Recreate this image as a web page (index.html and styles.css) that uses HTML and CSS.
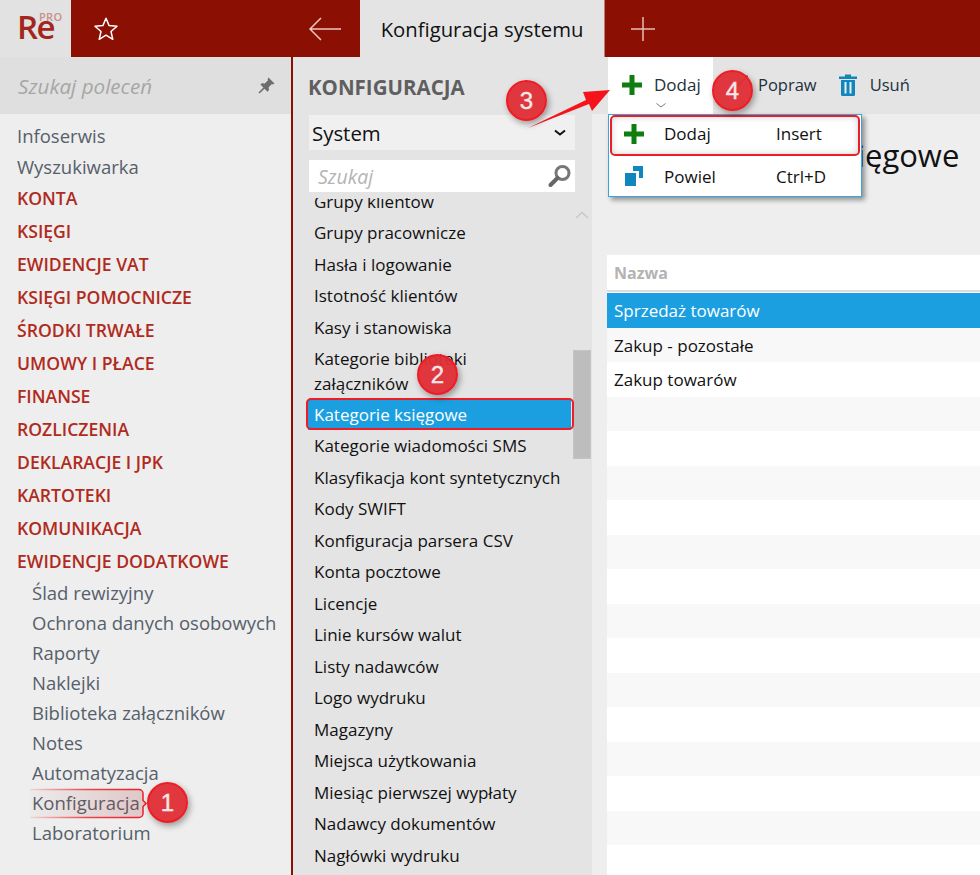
FILE: index.html
```html
<!DOCTYPE html>
<html lang="pl">
<head>
<meta charset="utf-8">
<title>Konfiguracja systemu</title>
<link rel="stylesheet" href="styles.css">
</head>
<body>
<div class="app">
  <header class="topbar">
    <div class="logo"><span class="logo-re">Re</span><span class="logo-pro">PRO</span></div>
    <div class="fav">
      <svg width="28" height="28" viewBox="0 0 28 28"><path d="M14 3.2l3.1 7.4 7.9.7-6 5.2 1.8 7.8-6.8-4.1-6.8 4.1 1.8-7.8-6-5.2 7.9-.7z" fill="none" stroke="#fff" stroke-width="1.5" stroke-linejoin="round"/></svg>
    </div>
    <div class="back">
      <svg width="34" height="26" viewBox="0 0 34 26"><path d="M33 13H2M13 2L2 13l11 11" fill="none" stroke="#eec5bf" stroke-width="1.5"/></svg>
    </div>
    <div class="tab">Konfiguracja systemu</div>
    <div class="newtab">
      <svg width="26" height="26" viewBox="0 0 26 26"><path d="M13 1v24M1 13h24" fill="none" stroke="#e8bcb6" stroke-width="1.5"/></svg>
    </div>
  </header>
  <div class="main">
    <aside class="side">
      <div class="side-search">
        <span>Szukaj poleceń</span>
        <svg class="pin" width="20" height="20" viewBox="0 0 20 20"><path d="M12.5 1.5l6 6-1.6 1-1-.4-3.2 3.2.2 3-1.4 1.4-3-3-5 4.8-1-.9 4.900-5-3-3 1.400-1.400 3 .2 3.200-3.200-.4-1z" fill="#6d6d6d"/></svg>
      </div>
      <nav class="side-nav">
        <a class="plain">Infoserwis</a>
        <a class="plain">Wyszukiwarka</a>
        <a class="group">KONTA</a>
        <a class="group">KSIĘGI</a>
        <a class="group">EWIDENCJE VAT</a>
        <a class="group">KSIĘGI POMOCNICZE</a>
        <a class="group">ŚRODKI TRWAŁE</a>
        <a class="group">UMOWY I PŁACE</a>
        <a class="group">FINANSE</a>
        <a class="group">ROZLICZENIA</a>
        <a class="group">DEKLARACJE I JPK</a>
        <a class="group">KARTOTEKI</a>
        <a class="group">KOMUNIKACJA</a>
        <a class="group">EWIDENCJE DODATKOWE</a>
        <a class="sub">Ślad rewizyjny</a>
        <a class="sub">Ochrona danych osobowych</a>
        <a class="sub">Raporty</a>
        <a class="sub">Naklejki</a>
        <a class="sub">Biblioteka załączników</a>
        <a class="sub">Notes</a>
        <a class="sub">Automatyzacja</a>
        <a class="sub">Konfiguracja</a>
        <a class="sub">Laboratorium</a>
      </nav>
    </aside>
    <section class="mid">
      <h2 class="mid-title">KONFIGURACJA</h2>
      <div class="select"><span>System</span>
        <svg width="12" height="8" viewBox="0 0 12 8"><path d="M1 1.500l5 4 5-4" fill="none" stroke="#111" stroke-width="2"/></svg>
      </div>
      <div class="search"><span>Szukaj</span>
        <svg width="26" height="26" viewBox="0 0 26 26"><circle cx="15.500" cy="10" r="6.500" fill="#fff" stroke="#777" stroke-width="3"/><path d="M10.500 15l-7 7" stroke="#666" stroke-width="4" stroke-linecap="round"/></svg>
      </div>
      <div class="list-wrap">
        <ul class="list">
          <li>Grupy klientów</li>
          <li>Grupy pracownicze</li>
          <li>Hasła i logowanie</li>
          <li>Istotność klientów</li>
          <li>Kasy i stanowiska</li>
          <li class="two">Kategorie biblioteki załączników</li>
          <li class="active">Kategorie księgowe</li>
          <li>Kategorie wiadomości SMS</li>
          <li>Klasyfikacja kont syntetycznych</li>
          <li>Kody SWIFT</li>
          <li>Konfiguracja parsera CSV</li>
          <li>Konta pocztowe</li>
          <li>Licencje</li>
          <li>Linie kursów walut</li>
          <li>Listy nadawców</li>
          <li>Logo wydruku</li>
          <li>Magazyny</li>
          <li>Miejsca użytkowania</li>
          <li>Miesiąc pierwszej wypłaty</li>
          <li>Nadawcy dokumentów</li>
          <li>Nagłówki wydruku</li>
        </ul>
        <div class="scroll">
          <svg class="scroll-up" width="14" height="8" viewBox="0 0 14 8"><path d="M1 7l6-5.500L13 7" fill="none" stroke="#c8c8c8" stroke-width="1.500"/></svg>
          <div class="thumb"></div>
        </div>
      </div>
    </section>
    <section class="content">
      <div class="toolbar">
        <div class="tool tool-open">
          <svg class="i-plus" width="20" height="20" viewBox="0 0 20 20"><path d="M10 0v20M0 10h20" stroke="#0f7d0f" stroke-width="5"/></svg>
          <span>Dodaj</span>
          <svg class="caret" width="10" height="5" viewBox="0 0 10 5"><path d="M.500.500L5 4 9.500.500" fill="none" stroke="#777"/></svg>
        </div>
        <div class="tool tool-edit">
          <svg class="pencil" width="10" height="11" viewBox="0 0 10 11"><path d="M9 0l1 1.500L2 10l-2 1 .500-2z" fill="#a01c1c"/></svg>
          <span>Popraw</span>
        </div>
        <div class="tool tool-del">
          <svg width="18" height="22" viewBox="0 0 18 22"><path d="M0 2.500h18V5H0zM6 .500h6v2H6z" fill="#0f86bd"/><path d="M2 6h14v14.500a1.500 1.500 0 0 1-1.500 1.500h-11A1.500 1.500 0 0 1 2 20.500z" fill="#0f86bd"/><path d="M6.500 8v11.500M11.500 8v11.500" stroke="#eee" stroke-width="2"/></svg>
          <span>Usuń</span>
        </div>
      </div>
      <div class="body">
        <h1 class="title">Kategorie księgowe</h1>
        <div class="thead">Nazwa</div>
        <div class="rows">
          <div class="row selected">Sprzedaż towarów</div>
          <div class="row alt">Zakup - pozostałe</div>
          <div class="row">Zakup towarów</div>
          <div class="row alt"></div><div class="row"></div>
          <div class="row alt"></div><div class="row"></div>
          <div class="row alt"></div><div class="row"></div>
          <div class="row alt"></div><div class="row"></div>
          <div class="row alt"></div><div class="row"></div>
          <div class="row alt"></div><div class="row"></div>
          <div class="row alt"></div><div class="row"></div>
        </div>
      </div>
    </section>
  </div>

  <div class="menu">
    <div class="menu-item">
      <svg width="20" height="20" viewBox="0 0 20 20"><path d="M10 0v20M0 10h20" stroke="#0f7d0f" stroke-width="5"/></svg>
      <span class="m-label">Dodaj</span><span class="m-key">Insert</span>
    </div>
    <div class="menu-item">
      <svg width="20" height="20" viewBox="0 0 20 20"><path d="M9 0h10v12h-4V5H9z" fill="#0f86bd"/><path d="M1 7h11v13H1z" fill="#0f86bd"/></svg>
      <span class="m-label">Powiel</span><span class="m-key">Ctrl+D</span>
    </div>
  </div>

  <svg class="mark-konf" width="120" height="32" viewBox="0 0 120 32">
    <defs>
      <linearGradient id="konfStroke" x1="0" x2="1" y1="0" y2="0">
        <stop offset="0" stop-color="#ee1c25" stop-opacity=".1"/>
        <stop offset=".5" stop-color="#ee1c25" stop-opacity=".8"/>
        <stop offset="1" stop-color="#ee1c25"/>
      </linearGradient>
      <linearGradient id="konfFill" x1="0" x2="1" y1="0" y2="0">
        <stop offset="0" stop-color="#b43c3c" stop-opacity=".02"/>
        <stop offset="1" stop-color="#a83c3c" stop-opacity=".22"/>
      </linearGradient>
    </defs>
    <path d="M0 1.500H109a4 4 0 0 1 4 4v7l3 3-3 3v7a4 4 0 0 1-4 4H0z" fill="url(#konfFill)"/>
    <path d="M0 1.500H109a4 4 0 0 1 4 4v7l3 3-3 3v7a4 4 0 0 1-4 4H0" fill="none" stroke="url(#konfStroke)" stroke-width="1.500"/>
  </svg>
  <div class="mark mark-kat"></div>
  <div class="mark mark-dodaj"></div>

  <svg class="arrow" width="84" height="48" viewBox="0 0 84 48"><path d="M0 43L58 15 55 7 82 5 64 26 61 19z" fill="#f5141c"/></svg>

  <div class="badge b1">1</div>
  <div class="badge b2">2</div>
  <div class="badge b3">3</div>
  <div class="badge b4">4</div>
</div>
</body>
</html>
```
FILE: styles.css
```css
* { box-sizing: border-box; }
html, body { margin: 0; padding: 0; }
body { width: 980px; height: 875px; overflow: hidden; font-family: "Open Sans", "Noto Sans", sans-serif; background: #eee; }
.app { position: relative; width: 980px; height: 875px; overflow: hidden; }

.topbar { display: flex; height: 57px; background: #8b1003; }
.logo { position: relative; width: 71px; background: #e2e2e2; }
.logo-re { position: absolute; left: 17px; top: 5px; font: 600 33px/44px "Open Sans", sans-serif; color: #a3261c; letter-spacing: -1.500px; }
.logo-pro { position: absolute; left: 39px; top: 11px; font: 600 11px/12px "Open Sans", sans-serif; color: #c98f8a; letter-spacing: .3px; }
.fav { width: 69px; display: flex; align-items: center; justify-content: center; }
.back { width: 220px; display: flex; align-items: center; justify-content: flex-end; padding-right: 18px; }
.tab { width: 244px; background: #e4e4e4; color: #111; font-size: 20.300px; font-weight: 500; display: flex; align-items: center; justify-content: center; white-space: nowrap; }
.newtab { width: 76px; display: flex; align-items: center; justify-content: center; border-left: 1px solid #b9807a; }

.main { display: flex; height: 818px; }

.side { width: 293px; flex: none; background: #eee; border-right: 2px solid #8b1003; }
.side-search { height: 57px; background: #dfdfdf; display: flex; align-items: center; justify-content: space-between; padding: 0 15px 0 18px; color: #a6a6a6; font-style: italic; font-size: 20.600px; }
.side-nav { display: flex; flex-direction: column; padding-top: 7px; }
.side-nav a { display: block; padding-left: 17px; white-space: nowrap; }
.plain { height: 31px; line-height: 30px; color: #56606a; font-size: 18.500px; }
.group { height: 33px; line-height: 31px; color: #b02a20; font-weight: 600; font-size: 17.600px; }
.sub { height: 30px; line-height: 28px; color: #56606a; font-size: 18.500px; }
.side-nav .sub { padding-left: 32px; }

.mid { width: 299px; flex: none; background: #e4e4e4; display: flex; flex-direction: column; padding-top: 14px; }
.mid-title { margin: 0 0 0 15px; height: 32px; font-size: 20.500px; line-height: 32px; font-weight: 700; color: #5f5f5f; white-space: nowrap; }
.select { margin: 12px 0 0 16px; width: 266px; height: 35px; background: #f0f0f0; display: flex; align-items: center; justify-content: space-between; padding: 0 9px 0 3px; color: #111; font-size: 20.400px; font-weight: 500; }
.search { margin: 10px 0 0 16px; width: 266px; height: 32px; background: #fff; display: flex; align-items: center; justify-content: space-between; padding: 0 2px 0 9px; color: #b4b4b4; font-style: italic; font-size: 19.500px; }
.list-wrap { flex: 1; position: relative; min-height: 0; overflow: hidden; display: flex; margin-top: 6px; }
.list { list-style: none; margin: -12.500px 0 0 0; padding: 0; width: 280px; flex: none; }
.list li { height: 31.500px; line-height: 31.500px; padding-left: 21px; font-size: 17px; color: #111; white-space: nowrap; }
.list .two { height: 56px; line-height: 25px; padding-top: 3px; padding-right: 30px; white-space: normal; }
.list .active { height: 31px; line-height: 31px; margin-left: 15px; margin-right: 2px; padding-left: 6px; background: #1b9fe1; color: #fff; }
.scroll { width: 19px; flex: none; position: relative; }
.scroll-up { position: absolute; left: 2px; top: 13px; }
.thumb { position: absolute; left: 0; top: 152px; width: 18px; height: 109px; background: #bdbdbd; border: 1px solid #c4c4c4; }

.content { flex: 1; min-width: 0; display: flex; flex-direction: column; }
.toolbar { height: 57px; background: #e4e4e4; display: flex; padding-left: 16px; color: #22303c; font-size: 16.500px; }
.tool { display: flex; align-items: center; height: 57px; gap: 13px; padding-bottom: 2px; }
.tool-open { position: relative; width: 105px; background: #fff; padding-left: 14px; gap: 12px; font-size: 17px; }
.i-plus { flex: none; }
.caret { position: absolute; left: 48px; top: 46px; }
.tool-edit { position: relative; margin-left: 45px; }
.pencil { position: absolute; left: -20px; top: 18px; }
.tool-del { margin-left: 22px; }
.body { flex: 1; min-height: 0; background: #eee; padding: 23px 0 0 15px; overflow: hidden; }
.title { margin: 0; height: 118px; padding-left: 73px; font-size: 31px; line-height: 36px; font-weight: 400; color: #111; white-space: nowrap; }
.thead { height: 37px; background: #fff; color: #b3b3b3; font-size: 16px; font-weight: 700; line-height: 37px; padding-left: 7px; border-bottom: 2px solid #dcdcdc; }
.rows { padding-top: 1px; background: #fff; }
.row { height: 34.500px; line-height: 35.500px; padding-left: 7px; font-size: 17px; color: #111; background: #fff; }
.row.alt { background: #f8f8f8; }
.row.selected { background: #1b9fe1; color: #fff; }

.menu { position: absolute; left: 608px; top: 114px; width: 254px; height: 83px; background: #fff; border: 1px solid #39a5dd; box-shadow: 3px 3px 5px rgba(0,0,0,.4); font-size: 17px; color: #111; display: flex; flex-direction: column; }
.menu-item { height: 41px; display: flex; align-items: center; padding: 0 0 3px 15px; }
.menu-item + .menu-item { padding: 1px 0 0 15px; }
.m-label { width: 112px; margin-left: 20px; }
.m-key { flex: none; }

.mark { position: absolute; border: 2px solid #ee1c25; border-radius: 5px; }
.mark-konf { position: absolute; left: 30px; top: 788px; }
.mark-kat { left: 306px; top: 398px; width: 268px; height: 32px; }
.mark-dodaj { left: 610px; top: 115px; width: 250px; height: 41px; box-shadow: inset 0 0 6px rgba(0,0,0,.2); }

.arrow { position: absolute; left: 528px; top: 85px; }

.badge { position: absolute; width: 41px; height: 41px; border-radius: 50%; background: rgba(223,48,54,.96); border: 2px solid #ee1c25; box-shadow: 2px 3px 6px rgba(0,0,0,.35); color: #f6e8e8; font: 400 24px/37px "Liberation Sans", sans-serif; -webkit-text-stroke: .4px #f6e8e8; text-align: center; }
.b1 { left: 147px; top: 782px; }
.b2 { left: 417px; top: 354px; }
.b3 { left: 506px; top: 80px; }
.b4 { left: 712px; top: 70px; }
```
